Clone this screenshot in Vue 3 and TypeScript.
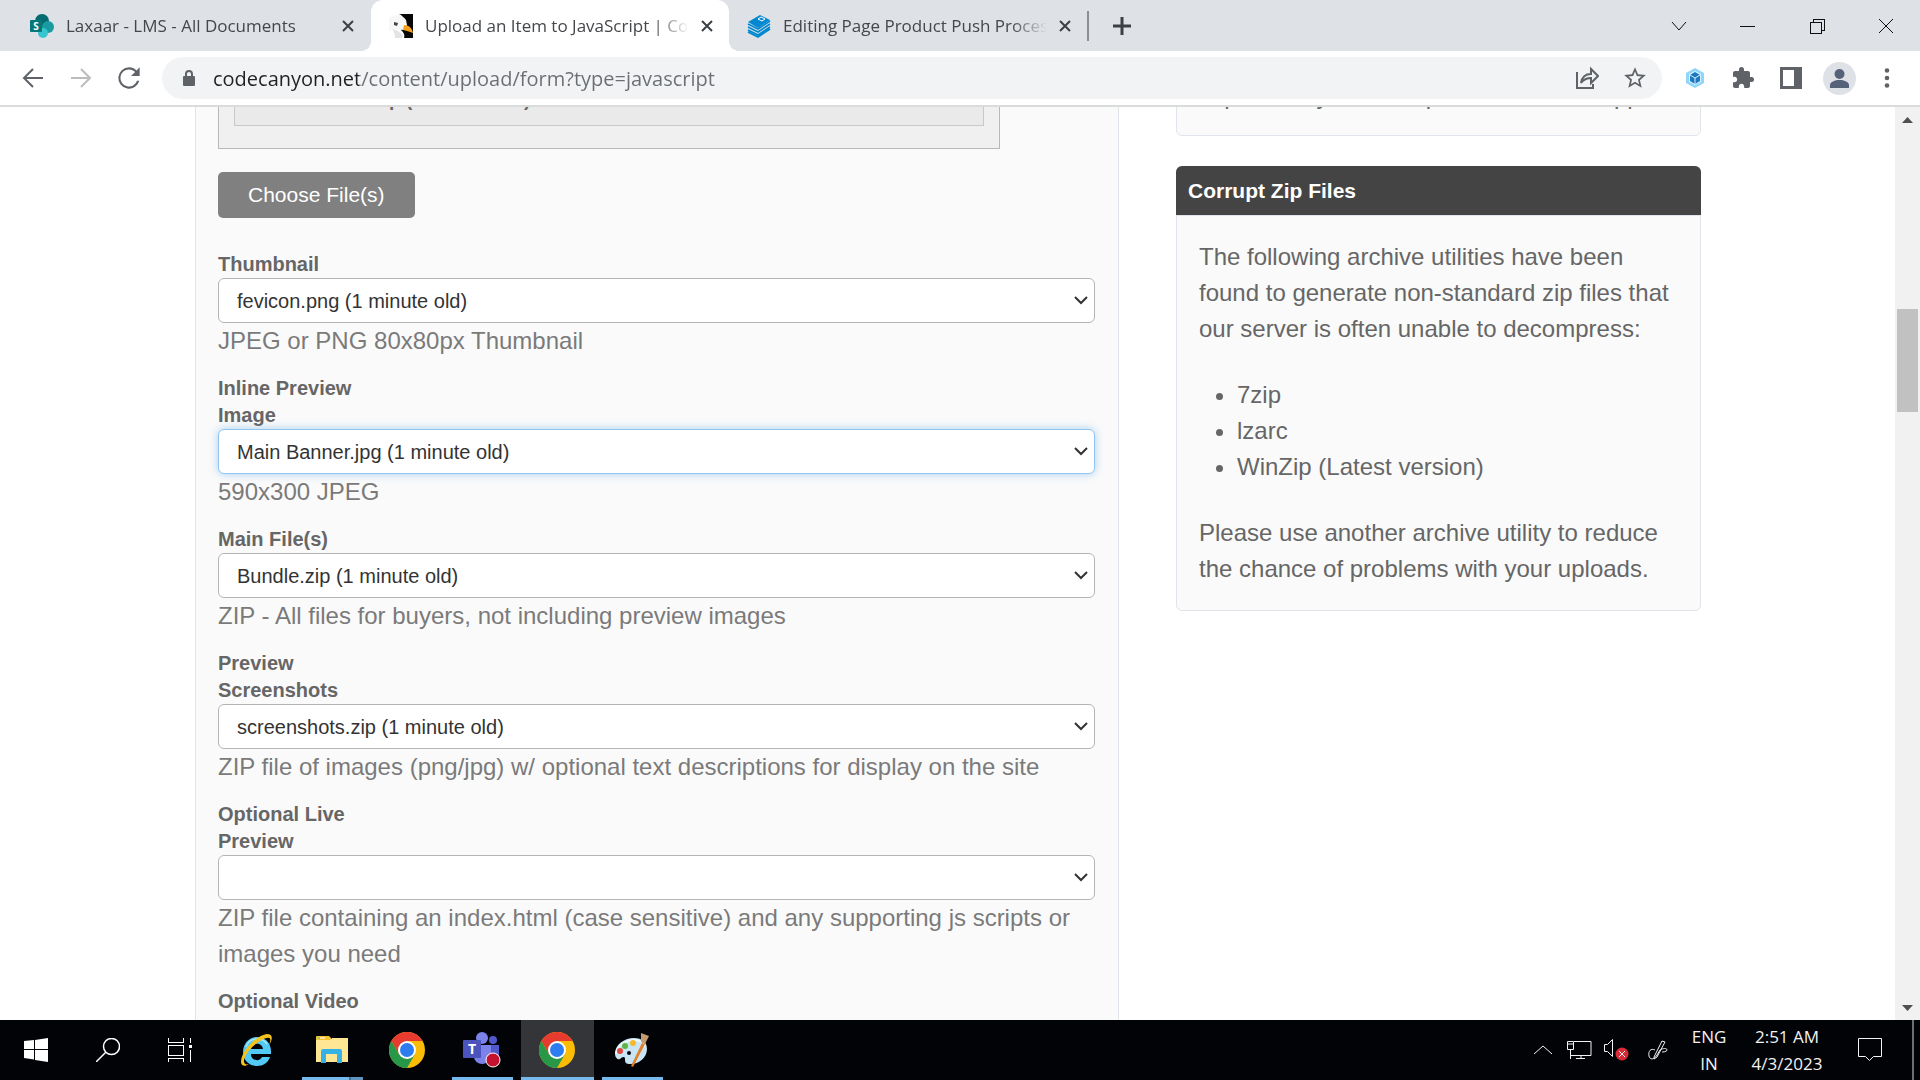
<script setup lang="ts">
import { ref } from 'vue'

interface FileField {
  id: string
  label: string
  file: string
  help: string
}

const fields: FileField[] = [
  { id: 'thumbnail', label: 'Thumbnail', file: 'fevicon.png (1 minute old)', help: 'JPEG or PNG 80x80px Thumbnail' },
  { id: 'inline-preview', label: 'Inline Preview Image', file: 'Main Banner.jpg (1 minute old)', help: '590x300 JPEG' },
  { id: 'main-files', label: 'Main File(s)', file: 'Bundle.zip (1 minute old)', help: 'ZIP - All files for buyers, not including preview images' },
  { id: 'screenshots', label: 'Preview Screenshots', file: 'screenshots.zip (1 minute old)', help: 'ZIP file of images (png/jpg) w/ optional text descriptions for display on the site' },
  { id: 'live-preview', label: 'Optional Live Preview', file: '', help: 'ZIP file containing an index.html (case sensitive) and any supporting js scripts or images you need' },
]

const activeField = ref('inline-preview')
const address = ref('codecanyon.net/content/upload/form?type=javascript')
const utilities = ['7zip', 'lzarc', 'WinZip (Latest version)']
</script>

<template>
  <div class="screen">
    <header class="tabstrip">
      <div class="tab first">
        <svg class="favicon" viewBox="0 0 24 24" aria-hidden="true">
          <circle cx="12" cy="7" r="7" fill="#036c70" />
          <circle cx="18" cy="13" r="6" fill="#1a9ba1" />
          <circle cx="13" cy="19" r="5" fill="#37c6d0" />
          <rect x="0" y="6" width="12" height="12" rx="1" fill="#03787c" />
          <text x="6" y="16" text-anchor="middle" font-size="10" font-weight="700" fill="#fff">S</text>
        </svg>
        <button class="title">Laxaar - LMS - All Documents</button>
        <button class="close" aria-label="Close tab"><svg viewBox="0 0 18 18"><path d="M4 4l10 10M14 4L4 14" /></svg></button>
      </div>
      <div class="tab active">
        <svg class="favicon" viewBox="0 0 24 24" aria-hidden="true">
          <rect width="24" height="24" fill="#fff" />
          <path d="M10 0h14v24H15c1-3 0-5-3-8l3-9c0-3-2-6-5-7z" fill="#080808" />
          <path d="M0 4c4-4 14-4 17 2l1 5-3 5c-4 0-7-1-9-1l-6 2z" fill="#f7f7f7" />
          <path d="M3 15c5 1 8 3 11 6l-1 3H6c0-4-1-6-3-9z" fill="#e4e4e4" />
          <path d="M15 11c5 0 8 3 9 8-3-1-5-2-10-3z" fill="#f6a11c" />
          <path d="M5 8l4 1-1 3-3-1z" fill="#444" />
        </svg>
        <button class="title">Upload an Item to JavaScript | CodeCanyon</button>
        <button class="close" aria-label="Close tab"><svg viewBox="0 0 18 18"><path d="M4 4l10 10M14 4L4 14" /></svg></button>
      </div>
      <div class="tab">
        <svg class="favicon" viewBox="0 0 24 24" aria-hidden="true">
          <path d="M1 8l12-7 10 5-12 8z" fill="#0288d1" />
          <path d="M11 5l3-2 4 2-3 2z" fill="none" stroke="#fff" stroke-width="1" />
          <path d="M1 10l10 5 12-8M1 13l10 5 12-8M1 16l10 5 12-8M1 18l10 5 12-8" fill="none" stroke="#0288d1" stroke-width="1.700" />
        </svg>
        <button class="title">Editing Page Product Push Process | Laxaar</button>
        <button class="close" aria-label="Close tab"><svg viewBox="0 0 18 18"><path d="M4 4l10 10M14 4L4 14" /></svg></button>
      </div>
      <span class="tab-divider"></span>
      <button class="new-tab" aria-label="New tab"><svg viewBox="0 0 18 18"><path d="M9 0v18M0 9h18" /></svg></button>
      <div class="window-controls">
        <button aria-label="Search tabs"><svg viewBox="0 0 16 16"><path d="M1 4l7 8 7-8" /></svg></button>
        <button aria-label="Minimize"><svg viewBox="0 0 16 16"><path d="M0 8h15" shape-rendering="crispEdges" /></svg></button>
        <button aria-label="Restore"><svg viewBox="0 0 16 16" shape-rendering="crispEdges"><path d="M1 4h11v11H1zM4 4V1h11v11h-3" /></svg></button>
        <button aria-label="Close"><svg viewBox="0 0 16 16"><path d="M1 1l14 14M15 1L1 15" /></svg></button>
      </div>
    </header>

    <nav class="toolbar">
      <button class="tool" aria-label="Back">
        <svg width="22" height="22" viewBox="0 0 22 22" class="line"><path d="M21 11H2M11 2l-9 9 9 9" /></svg>
      </button>
      <button class="tool" aria-label="Forward">
        <svg width="22" height="22" viewBox="0 0 22 22" class="line faint"><path d="M1 11h19M11 2l9 9-9 9" /></svg>
      </button>
      <button class="tool" aria-label="Reload">
        <svg width="32" height="32" viewBox="0 0 24 24"><path d="M17.650 6.350A7.958 7.958 0 0 0 12 4a8 8 0 1 0 7.730 10h-1.700A6.400 6.400 0 1 1 12 5.600c1.800 0 3.400.700 4.600 1.900L13.500 10.500H20V4z" /></svg>
      </button>
      <div class="omnibox">
        <svg class="lock" width="12" height="16" viewBox="0 0 12 16" aria-hidden="true">
          <rect x="0" y="6" width="12" height="10" rx="1" fill="#5f6368" />
          <path d="M3 7V4a3 3 0 0 1 6 0v3" fill="none" stroke="#5f6368" stroke-width="2" />
        </svg>
        <input v-model="address" class="address" type="text" aria-label="Address and search bar" spellcheck="false" />
        <button class="tool" aria-label="Share">
          <svg width="24" height="24" viewBox="0 0 24 24" class="thin"><path d="M2 6v16h16v-4M6 17c1-6 5-9 10-9V3l7 7-7 7v-5c-4 0-7 1-10 5z" /></svg>
        </button>
        <button class="tool" aria-label="Bookmark">
          <svg width="26" height="26" viewBox="0 0 24 24"><path d="M22 9.240l-7.190-.620L12 2 9.190 8.630 2 9.240l5.460 4.730L5.820 21 12 17.270 18.180 21l-1.630-7.030L22 9.240zM12 15.400l-3.760 2.270 1-4.280-3.320-2.880 4.380-.380L12 6.100l1.710 4.040 4.380.380-3.320 2.880 1 4.280L12 15.400z" /></svg>
        </button>
      </div>
      <button class="tool" aria-label="Extension">
        <svg width="20" height="20" viewBox="0 0 20 20">
          <path d="M10 0l9 5v10l-9 5-9-5V5z" fill="#8ed6fb" />
          <path d="M10 3l6 3v8l-6 3-6-3V6z" fill="#d9f1fd" />
          <path d="M10 4l5 3v6l-5 3-5-3V7z" fill="#1c78c0" />
          <path d="M5 7l5 3 5-3M10 10v6" fill="none" stroke="#d9f1fd" stroke-width="1" />
        </svg>
      </button>
      <button class="tool" aria-label="Extensions">
        <svg width="24" height="24" viewBox="0 0 24 24"><path d="M20.500 11H19V7c0-1.100-.900-2-2-2h-4V3.500a2.500 2.500 0 0 0-5 0V5H4c-1.100 0-2 .900-2 2v3.800h1.500c1.490 0 2.700 1.210 2.700 2.700s-1.210 2.700-2.700 2.700H2V20c0 1.100.900 2 2 2h3.800v-1.500c0-1.490 1.210-2.700 2.700-2.700s2.700 1.210 2.700 2.700V22H17c1.100 0 2-.900 2-2v-4h1.500a2.500 2.500 0 0 0 0-5z" /></svg>
      </button>
      <button class="tool" aria-label="Side panel">
        <svg width="22" height="22" viewBox="0 0 22 22"><path d="M0 0h22v22H0zM3 3v16h11V3z" fill-rule="evenodd" /></svg>
      </button>
      <button class="tool" aria-label="Profile">
        <svg width="33" height="33" viewBox="0 0 33 33">
          <circle cx="16.500" cy="16.500" r="16.500" fill="#dee1e6" />
          <circle cx="16.500" cy="12" r="5" fill="#56617a" />
          <path d="M7 26v-3c0-3 5-5 9.500-5s9.500 2 9.500 5v3z" fill="#56617a" />
        </svg>
      </button>
      <button class="tool" aria-label="Menu">
        <svg width="6" height="20" viewBox="0 0 6 20"><circle cx="3" cy="2.500" r="2.300" /><circle cx="3" cy="10" r="2.300" /><circle cx="3" cy="17.500" r="2.300" /></svg>
      </button>
    </nav>

    <div class="viewport">
      <div class="page">
        <div class="columns">
          <main class="upload-panel">
            <div class="queue">
              <div class="queued-file">screenshots.zip (1 minute old)</div>
            </div>
            <button class="choose">Choose File(s)</button>
            <div v-for="field in fields" :key="field.id" class="field">
              <label :for="field.id">{{ field.label }}</label>
              <div class="select-wrap">
                <select :id="field.id" :class="{ focused: field.id === activeField }" @focus="activeField = field.id">
                  <option>{{ field.file }}</option>
                </select>
                <svg class="chevron" width="14" height="9" viewBox="0 0 14 9" aria-hidden="true"><path d="M1 1l6 6 6-6" /></svg>
              </div>
              <p class="help">{{ field.help }}</p>
            </div>
            <div class="field">
              <label for="video">Optional Video Preview</label>
              <div class="select-wrap"><select id="video"><option></option></select></div>
            </div>
          </main>
          <aside class="sidebar">
            <section class="card upper">
              <div class="card-body"><p>expected by the new process where support</p></div>
            </section>
            <section class="card">
              <h2>Corrupt Zip Files</h2>
              <div class="card-body">
                <p>The following archive utilities have been found to generate non-standard zip files that our server is often unable to decompress:</p>
                <ul>
                  <li v-for="utility in utilities" :key="utility">{{ utility }}</li>
                </ul>
                <p>Please use another archive utility to reduce the chance of problems with your uploads.</p>
              </div>
            </section>
          </aside>
        </div>
      </div>
      <div class="scrollbar" aria-hidden="true">
        <svg width="11" height="6" viewBox="0 0 11 6"><path d="M0 6l5.500-6L11 6z" fill="#505050" /></svg>
        <div class="track">
          <div class="before"></div>
          <div class="thumb"></div>
          <div class="after"></div>
        </div>
        <svg width="11" height="6" viewBox="0 0 11 6"><path d="M0 0l5.500 6L11 0z" fill="#505050" /></svg>
      </div>
    </div>

    <footer class="taskbar">
      <button class="system" aria-label="Start">
        <svg width="24" height="24" viewBox="0 0 24 24" fill="#fff"><path d="M0 3l10-1v9H0zM11 2l13-2v11H11zM0 12h10v9.500L0 20zM11 12h13v12l-13-2z" /></svg>
      </button>
      <button class="system" aria-label="Search">
        <svg width="24" height="24" viewBox="0 0 24 24" fill="none" stroke="#fff" stroke-width="1.500"><circle cx="15.500" cy="8.500" r="8" /><path d="M10 14L0 24" /></svg>
      </button>
      <button class="system" aria-label="Task view">
        <svg width="24" height="24" viewBox="0 0 24 24" fill="none" stroke="#fff" shape-rendering="crispEdges"><path d="M.5 0v4h15V0M.5 7h15v10H.5zM.5 24v-4h15v4M22.500 0v5M22.500 12v12" /><path d="M21 7h3v3h-3z" fill="#fff" stroke="none" /></svg>
      </button>
      <button class="app" aria-label="Internet Explorer">
        <svg width="36" height="36" viewBox="1 0 36 36">
          <path d="M33 22H13c0 7 9 8 11 3h8c-2 6-7 9-13 9-8 0-14-6-14-14S11 5 19 5s15 6 14 17zM13 17h12c-1-7-11-7-12 0z" fill="#53c9f5" />
          <path d="M8 15c2-6 6-8 11-8s8 2 10 5" fill="none" stroke="#a8e6fc" stroke-width="1.500" />
          <path d="M11 32c-4 3-8 2-8-2C3 19 19 3 29 2c6 0 6 5 2 11 2-5 2-8-2-7C21 7 6 21 6 29c0 3 2 4 5 3z" fill="#f8c21d" />
        </svg>
      </button>
      <button class="app" aria-label="File Explorer">
        <svg width="32" height="28" viewBox="0 0 32 28">
          <path d="M0 1a1 1 0 0 1 1-1h12l2 2v3H0z" fill="#f4c430" />
          <path d="M0 4h14l2-2h16v24H0z" fill="#ffe694" />
          <path d="M2 2h7" stroke="#fff" /><path d="M2 2h2" stroke="#3aa757" />
          <path d="M5 27V15a2 2 0 0 1 2-2h17a2 2 0 0 1 2 2v12h-5v-9H10v9z" fill="#34b2e8" />
        </svg>
        <span class="running grouped"></span>
      </button>
      <button class="app" aria-label="Google Chrome">
        <svg width="36" height="36" viewBox="0 0 36 36">
          <circle cx="18" cy="18" r="18" fill="#fbbc05" />
          <path d="M2.400 9A18 18 0 0 1 33.600 9H18l-7.800 13.500z" fill="#e63b2e" />
          <path d="M2.400 9A18 18 0 0 0 18 36l7.800-13.500H10.200z" fill="#279847" />
          <circle cx="18" cy="18" r="9" fill="#fff" /><circle cx="18" cy="18" r="7" fill="#2d7df0" />
        </svg>
      </button>
      <button class="app" aria-label="Microsoft Teams">
        <svg width="38" height="36" viewBox="0 0 38 36">
          <circle cx="30" cy="8" r="4" fill="#5059c9" /><circle cx="19" cy="6" r="6" fill="#7b83eb" />
          <path d="M26 13h10v11c0 4-5 7-10 5z" fill="#5059c9" />
          <path d="M11 13h17v11c0 10-17 11-17 0z" fill="#7b83eb" />
          <rect x="0" y="8" width="18" height="18" rx="1" fill="#4b53bc" />
          <text x="9" y="22" text-anchor="middle" font-size="14" font-weight="700" fill="#fff">T</text>
          <circle cx="30" cy="28" r="7" fill="#c4122f" stroke="#fff" />
        </svg>
        <span class="running"></span>
      </button>
      <button class="app current" aria-label="Google Chrome, active">
        <svg width="36" height="36" viewBox="0 0 36 36">
          <circle cx="18" cy="18" r="18" fill="#fbbc05" />
          <path d="M2.400 9A18 18 0 0 1 33.600 9H18l-7.800 13.500z" fill="#e63b2e" />
          <path d="M2.400 9A18 18 0 0 0 18 36l7.800-13.500H10.200z" fill="#279847" />
          <circle cx="18" cy="18" r="9" fill="#fff" /><circle cx="18" cy="18" r="7" fill="#2d7df0" />
        </svg>
        <span class="running"></span>
      </button>
      <button class="app" aria-label="Paint">
        <svg width="36" height="36" viewBox="0 0 36 36">
          <path d="M1 22C1 12 11 6 20 6c8 0 13 4 13 11 0 9-9 16-18 15-4 0-4-3-4-5 0-3-3-2-5 0-2 1-5-1-5-5z" fill="#c9e4f3" />
          <path d="M2 22C3 13 12 8 20 8c6 0 10 3 11 7" fill="none" stroke="#eef8fd" stroke-width="2" />
          <circle cx="15" cy="21" r="2" fill="#05070a" />
          <circle cx="6" cy="19" r="3" fill="#e2483d" /><circle cx="11" cy="14" r="3" fill="#5cb545" /><circle cx="19" cy="11" r="3" fill="#f5b92b" />
          <path d="M28 11l3 1-12 23-2-1z" fill="#e0802b" />
          <path d="M27 1l8 3-4 8-4-2z" fill="#c59a6d" />
        </svg>
        <span class="running"></span>
      </button>

      <div class="tray">
        <button class="hidden-icons" aria-label="Show hidden icons"><svg width="18" height="10" viewBox="0 0 18 10" class="tray-line"><path d="M0 9l9-8 9 8" /></svg></button>
        <svg class="network" width="25" height="19" viewBox="0 0 25 19"><path d="M7 .5h17v14H4M.5.500h6v8h-6zM3.500 8v10M.5 3h6M14 15v3M9 17.500h9" class="tray-stroke" /></svg>
        <svg class="volume" width="25" height="22" viewBox="0 0 25 22"><path d="M.5 5.500h3l5-5v17l-5-5h-3z" class="tray-stroke" /><circle cx="18" cy="15" r="6.500" fill="#d92b35" /><path d="M15 12l6 6M21 12l-6 6" class="tray-stroke" /></svg>
        <svg class="pen" width="20" height="20" viewBox="0 0 20 20"><path d="M6 17L14 1l3 1-8 15-3 2zM7 10c-4-2-7 1-6 6 1 4 5 4 8-1l3-5c3-2 7-2 7 0s-5 2-5 2" class="tray-stroke" /></svg>
        <button class="language">ENG<br />IN</button>
        <button class="clock">2:51 AM<br />4/3/2023</button>
        <button class="notices" aria-label="Notifications"><svg width="24" height="24" viewBox="0 0 24 24"><path d="M.5.500h23v18h-8l-4 4-4-4h-7z" class="tray-stroke" /></svg></button>
      </div>
    </footer>
  </div>
</template>

<style>
body {
  margin: 0;
}
</style>

<style scoped>
* {
  box-sizing: border-box;
}

.screen {
  display: flex;
  flex-direction: column;
  height: 100vh;
  overflow: hidden;
  background: #fff;
  font-family: "Liberation Sans", Arial, sans-serif;
}

button {
  padding: 0;
  border: 0;
  background: none;
  font: inherit;
  color: inherit;
}

.tabstrip,
.toolbar,
.taskbar {
  font-family: "Segoe UI", "Open Sans", "Noto Sans", sans-serif;
}

.tabstrip {
  display: flex;
  flex: none;
  align-items: center;
  height: 51px;
  background: #dee1e6;
}

.tab {
  position: relative;
  display: flex;
  flex: 0 1 358px;
  align-items: center;
  min-width: 0;
  height: 51px;
  padding: 0 13px 0 18px;
}

.tab.first {
  flex-basis: 371px;
  padding: 0 14px 0 30px;
}

.tab.active {
  border-radius: 12px 12px 0 0;
  background: #fff;
}

.tab.active::before,
.tab.active::after {
  content: "";
  position: absolute;
  bottom: 0;
  width: 10px;
  height: 10px;
}

.tab.active::before {
  right: 100%;
  background: radial-gradient(circle at 0 0, #dee1e6 10px, #fff 10px);
}

.tab.active::after {
  left: 100%;
  background: radial-gradient(circle at 100% 0, #dee1e6 10px, #fff 10px);
}

.favicon {
  flex: none;
  width: 24px;
  height: 24px;
}

.title {
  flex: 1;
  min-width: 0;
  margin: 0 9px 0 12px;
  overflow: hidden;
  font-size: 17px;
  line-height: 24px;
  text-align: left;
  white-space: nowrap;
  color: #45474a;
  mask-image: linear-gradient(90deg, #000 calc(100% - 36px), transparent);
}

.close,
.close svg,
.new-tab svg {
  display: block;
  width: 18px;
  height: 18px;
}

.close svg,
.new-tab svg {
  fill: none;
  stroke: #3c4043;
  stroke-width: 2;
}

.new-tab svg {
  stroke-width: 3;
}

.tab-divider {
  width: 2px;
  height: 30px;
  background: #8b8e92;
}

.new-tab {
  margin-left: 24px;
}

.window-controls {
  display: flex;
  margin-left: auto;
}

.window-controls button {
  display: grid;
  place-items: center;
  width: 69px;
  height: 42px;
}

.window-controls svg {
  width: 16px;
  height: 16px;
  fill: none;
  stroke: #111;
}

.toolbar {
  display: flex;
  flex: none;
  align-items: center;
  height: 56px;
  padding: 0 9px;
  border-bottom: 2px solid #dadcdc;
}

.tool {
  display: grid;
  flex: none;
  place-items: center;
  width: 48px;
  height: 42px;
}

.tool svg {
  fill: #5f6368;
}

.tool svg.line {
  fill: none;
  stroke: #5f6368;
  stroke-width: 2;
}

.tool svg.faint {
  stroke: #babcbe;
}

.tool svg.thin {
  fill: none;
  stroke: #5f6368;
  stroke-width: 2;
}

.omnibox {
  display: flex;
  flex: 1;
  align-items: center;
  min-width: 0;
  height: 42px;
  margin: 0 9px;
  padding: 0 3px 0 21px;
  border-radius: 21px;
  background: #f1f3f4;
}

.lock {
  flex: none;
}

.address {
  flex: 1;
  min-width: 0;
  height: 32px;
  margin-left: 18px;
  padding: 0;
  border: 0;
  outline: 0;
  background: linear-gradient(90deg, #202124 146px, #6a6d72 146px);
  background-clip: text;
  font-family: inherit;
  font-size: 20px;
  color: #202124;
  -webkit-text-fill-color: transparent;
}

.viewport {
  display: flex;
  flex: 1;
  min-height: 0;
}

.page {
  flex: 1;
  min-width: 0;
  overflow: hidden;
}

.columns {
  display: grid;
  grid-template-columns: minmax(0, 924fr) minmax(0, 525fr);
  gap: 57px;
  align-items: start;
  width: calc(100% - 48px);
  max-width: 1507px;
  margin: -59px auto 0;
  padding-left: 1px;
}

.upload-panel {
  padding: 22px 23px 22px 22px;
  border: 1px solid #dfe5eb;
  background: #fafafa;
}

.queue {
  max-width: 782px;
  margin-bottom: 23px;
  padding: 0 15px 22px;
  border: 1px solid #b8b8b8;
  background: #f0f0f0;
}

.queued-file {
  padding: 14px 22px 12px;
  border: 1px solid #c8c8c8;
  border-top: 0;
  background: #eaeaea;
  font-size: 19px;
  font-weight: 700;
  line-height: 27px;
  color: #666;
}

.choose {
  display: block;
  height: 46px;
  margin-bottom: 33px;
  padding: 0 30px;
  border-radius: 5px;
  background: #808080;
  font-size: 21px;
  color: #fff;
}

.field {
  margin-bottom: 16px;
}

.field label {
  display: block;
  max-width: 160px;
  font-size: 20px;
  font-weight: 700;
  line-height: 27px;
  color: #666;
}

.select-wrap {
  position: relative;
}

.select-wrap select {
  display: block;
  width: 100%;
  height: 45px;
  padding: 0 36px 0 18px;
  border: 1px solid #b5b5b5;
  border-radius: 6px;
  outline: 0;
  background: #fff;
  appearance: none;
  font-family: inherit;
  font-size: 20px;
  color: #333;
}

.select-wrap select.focused {
  border-color: #93c5f0;
  box-shadow: 0 0 8px rgba(82, 168, 236, 0.5);
}

.chevron {
  position: absolute;
  top: 18px;
  right: 7px;
  fill: none;
  stroke: #333;
  stroke-width: 2;
  pointer-events: none;
}

.help {
  margin: 0;
  font-size: 24px;
  line-height: 36px;
  color: #7a7a7a;
}

.card {
  border: 1px solid #dfe5eb;
  border-radius: 6px;
  background: #fafafa;
}

.card.upper {
  margin: 6px 0 30px;
}

.card h2 {
  margin: -1px -1px 0;
  padding: 0 12px;
  border-bottom: 1px solid #dfe5eb;
  border-radius: 6px 6px 0 0;
  background: #444;
  background-clip: padding-box;
  font-size: 21px;
  line-height: 49px;
  color: #fff;
}

.card-body {
  padding: 23px 22px;
  font-size: 24px;
  line-height: 36px;
  color: #666;
}

.upper .card-body {
  padding-bottom: 21px;
}

.card-body p {
  margin: 0;
}

.card-body ul {
  margin: 30px 0;
  padding-left: 38px;
}

.scrollbar {
  display: flex;
  flex: none;
  flex-direction: column;
  align-items: center;
  width: 25px;
  padding: 10px 0 9px;
  background: #f1f1f1;
}

.track {
  display: flex;
  flex: 1;
  flex-direction: column;
  margin: 9px 0;
}

.before {
  flex: 177;
}

.thumb {
  flex: 103;
  width: 21px;
  background: #c1c1c1;
}

.after {
  flex: 583;
}

.taskbar {
  display: flex;
  flex: none;
  height: 60px;
  background: #010307;
  color: #f2f2f2;
}

.system,
.app {
  position: relative;
  display: grid;
  flex: none;
  place-items: center;
  width: 72px;
}

.app {
  width: 75px;
}

.system + .app {
  margin-left: 3px;
}

.app.current {
  background: linear-gradient(#333538, #333538) right / 73px 100% no-repeat;
}

.running {
  position: absolute;
  right: 6px;
  bottom: 0;
  left: 8px;
  height: 3px;
  background: #76b9ed;
}

.current .running {
  right: 0;
  left: 2px;
}

.running.grouped {
  background: linear-gradient(90deg, #76b9ed 47px, #4a7293 47px 49px, #5f95bf 49px);
}

.tray {
  display: flex;
  align-items: center;
  margin-left: auto;
  border-right: 2px solid #6d6e70;
  margin-right: 6px;
}

.tray svg {
  display: block;
}

.tray-line,
.tray-stroke {
  fill: none;
  stroke: #f2f2f2;
}

.network {
  margin-left: 15px;
}

.volume {
  margin-left: 12px;
}

.pen {
  margin-left: 19px;
}

.language,
.clock {
  font-size: 17px;
  line-height: 27px;
}

.language {
  width: 40px;
  margin-left: 21px;
}

.clock {
  width: 80px;
  margin-left: 18px;
}

.notices {
  margin: 0 30px 0 31px;
}
</style>
